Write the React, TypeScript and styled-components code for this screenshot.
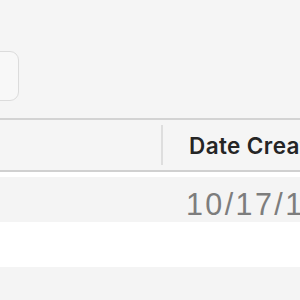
import React from "react";
import styled, { createGlobalStyle } from "styled-components";

const Global = createGlobalStyle`
  html, body { margin: 0; padding: 0; background: #ffffff; }
  body { font-family: "Liberation Sans", Arial, sans-serif; }
`;

const Window = styled.div`
  width: 300px;
  height: 300px;
  overflow: hidden;
  background: #ffffff;
  display: flex;
  flex-direction: column;
`;

const Toolbar = styled.div`
  height: 118px;
  flex: none;
  box-sizing: border-box;
  background: #f5f5f5;
  padding-top: 51px;
  display: flex;
  align-items: flex-start;
`;

const ToolButton = styled.div`
  width: 60px;
  height: 50px;
  margin-left: -41px;
  box-sizing: border-box;
  border: 1.5px solid #dcdcdc;
  border-radius: 9px;
  background: #f8f8f8;
`;

const Header = styled.div`
  height: 54px;
  flex: none;
  box-sizing: border-box;
  background: #f5f5f5;
  border-top: 2px solid #d3d3d3;
  border-bottom: 2px solid #d0d0d0;
  display: grid;
  grid-template-columns: 161px 2px 1fr;
  align-items: center;
`;

const ColumnDivider = styled.div`
  align-self: stretch;
  margin: 5px 0 5px;
  background: #dedede;
`;

const HeaderLabel = styled.div`
  padding-left: 26px;
  font-family: Inter, "Liberation Sans", sans-serif;
  font-weight: 600;
  font-size: 22.5px;
  letter-spacing: 0.4px;
  color: #252525;
  white-space: nowrap;
  overflow: hidden;
`;

const Rows = styled.div`
  padding-top: 5px;
  display: flex;
  flex-direction: column;
`;

const Row = styled.div<{ $striped: boolean }>`
  height: 45px;
  flex: none;
  background: ${(p) => (p.$striped ? "#f4f4f4" : "#ffffff")};
  display: grid;
  grid-template-columns: 186px 1fr;
  align-items: center;
`;

const DateCell = styled.div`
  grid-column: 2;
  padding-top: 10px;
  font-family: "Liberation Sans", Arial, sans-serif;
  font-size: 30.5px;
  letter-spacing: 2.4px;
  color: #7d7d7d;
  white-space: nowrap;
  overflow: hidden;
`;

const rows = ["10/17/16", "", ""];

export default function App() {
  return (
    <>
      <Global />
      <Window>
        <Toolbar>
          <ToolButton />
        </Toolbar>
        <Header>
          <div />
          <ColumnDivider />
          <HeaderLabel>Date Created</HeaderLabel>
        </Header>
        <Rows>
          {rows.map((d, i) => (
            <Row key={i} $striped={i % 2 === 0}>
              <DateCell>{d}</DateCell>
            </Row>
          ))}
        </Rows>
      </Window>
    </>
  );
}
